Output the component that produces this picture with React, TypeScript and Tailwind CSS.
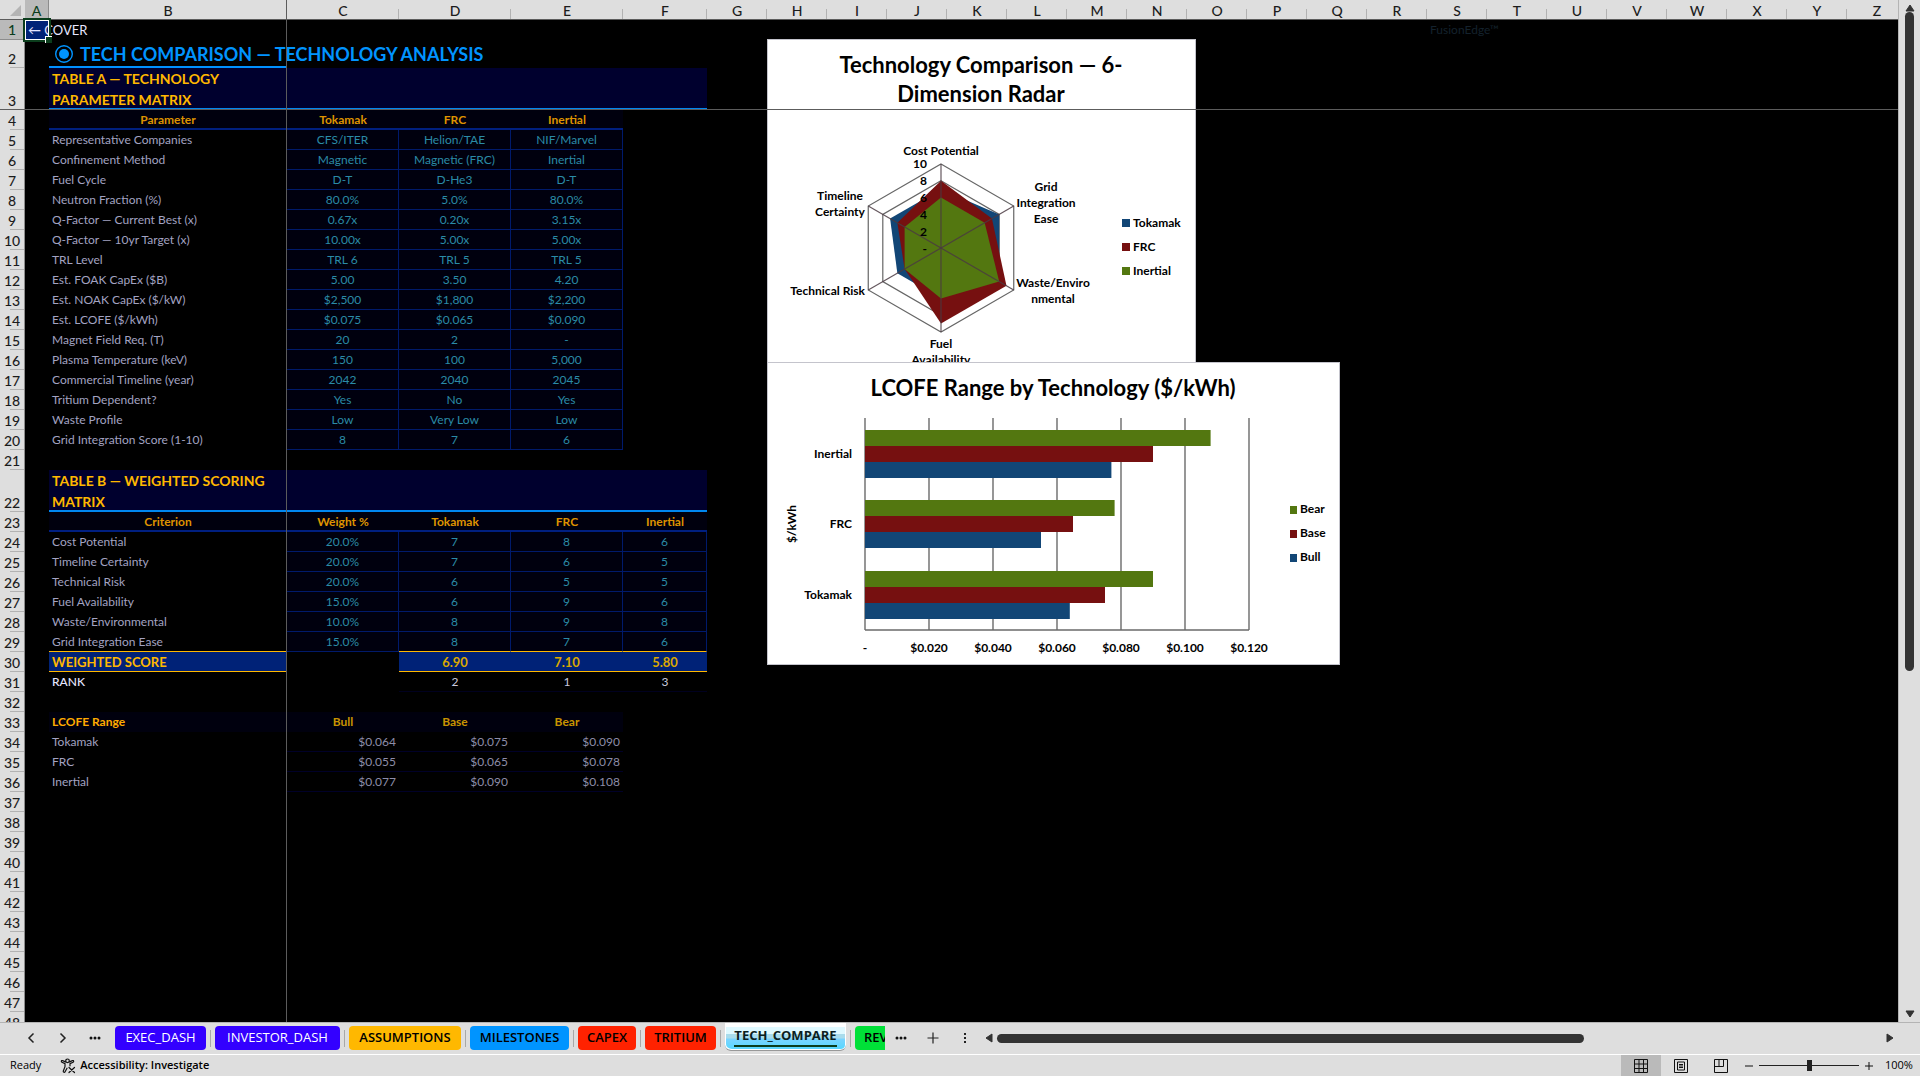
import { ReactNode } from 'react';

const COLUMNS = 'ABCDEFGHIJKLMNOPQRSTUVWXYZ'.split('');

const columnWidth: Record<string, string> = {
  A: 'w-[24px]',
  B: 'w-[238px]',
  C: 'w-[112px]',
  D: 'w-[112px]',
  E: 'w-[112px]',
  F: 'w-[84px]',
};

const styles = {
  empty: '',
  title: 'text-lg leading-6 font-bold text-[#0094ff] shadow-[inset_0_-2px_0_#0090ff]',
  band: 'bg-[#00002e] text-sm leading-[21px] font-bold whitespace-normal text-[#ffb800] shadow-[inset_0_-2px_0_#0087f0]',
  head: 'bg-[#00000e] text-center font-bold text-[#de9300] shadow-[inset_0_-2px_0_#001f80]',
  label: 'text-[#a3a3c2]',
  value: 'border-r border-b border-[#001a6b] bg-[#00000e] text-center text-[#2b8ba6]',
  lastLabel: 'border-b border-[#ffb800] text-[#a3a3c2]',
  lastValue: 'border-r border-b border-r-[#001a6b] border-b-[#ffb800] bg-[#00000e] text-center text-[#2b8ba6]',
  scoreLabel: 'border-b border-[#ffb800] bg-[#002277] text-[13px] font-bold text-[#ffb800]',
  score: 'border-b border-[#ffb800] bg-[#002277] text-center text-[13px] font-bold text-[#dba800]',
  rankLabel: 'font-medium text-[#e6e6ff]',
  rank: 'border-b border-[#00001f] text-center text-[#c9c9dd]',
  rangeLabel: 'bg-[#00000e] font-bold text-[#ffab00]',
  rangeHead: 'bg-[#00000e] text-center font-bold text-[#c99400]',
  money: 'border-b border-[#000028] text-right text-[#8d8da8]',
};

type Kind = keyof typeof styles;
type Cell = { text?: string; kind: Kind };

const cells = (kinds: Kind[], texts: string[]): Cell[] =>
  kinds.map((kind, i) => ({ kind, text: texts[i] }));

const fiveBands: Kind[] = ['band', 'band', 'band', 'band', 'band'];
const paramRow = (...t: string[]) => cells(['label', 'value', 'value', 'value'], t);
const scoreRow = (...t: string[]) => cells(['label', 'value', 'value', 'value', 'value'], t);
const moneyRow = (...t: string[]) => cells(['label', 'money', 'money', 'money'], t);

const sheet: Record<number, Cell[]> = {
  2: cells(['title'], ['TECH COMPARISON — TECHNOLOGY ANALYSIS']),
  3: cells(fiveBands, ['TABLE A — TECHNOLOGY PARAMETER MATRIX']),
  4: cells(['head', 'head', 'head', 'head'], ['Parameter', 'Tokamak', 'FRC', 'Inertial']),
  5: paramRow('Representative Companies', 'CFS/ITER', 'Helion/TAE', 'NIF/Marvel'),
  6: paramRow('Confinement Method', 'Magnetic', 'Magnetic (FRC)', 'Inertial'),
  7: paramRow('Fuel Cycle', 'D-T', 'D-He3', 'D-T'),
  8: paramRow('Neutron Fraction (%)', '80.0%', '5.0%', '80.0%'),
  9: paramRow('Q-Factor — Current Best (x)', '0.67x', '0.20x', '3.15x'),
  10: paramRow('Q-Factor — 10yr Target (x)', '10.00x', '5.00x', '5.00x'),
  11: paramRow('TRL Level', 'TRL 6', 'TRL 5', 'TRL 5'),
  12: paramRow('Est. FOAK CapEx ($B)', '5.00', '3.50', '4.20'),
  13: paramRow('Est. NOAK CapEx ($/kW)', '$2,500', '$1,800', '$2,200'),
  14: paramRow('Est. LCOFE ($/kWh)', '$0.075', '$0.065', '$0.090'),
  15: paramRow('Magnet Field Req. (T)', '20', '2', '-'),
  16: paramRow('Plasma Temperature (keV)', '150', '100', '5,000'),
  17: paramRow('Commercial Timeline (year)', '2042', '2040', '2045'),
  18: paramRow('Tritium Dependent?', 'Yes', 'No', 'Yes'),
  19: paramRow('Waste Profile', 'Low', 'Very Low', 'Low'),
  20: paramRow('Grid Integration Score (1-10)', '8', '7', '6'),
  22: cells(fiveBands, ['TABLE B — WEIGHTED SCORING MATRIX']),
  23: cells(['head', 'head', 'head', 'head', 'head'], ['Criterion', 'Weight %', 'Tokamak', 'FRC', 'Inertial']),
  24: scoreRow('Cost Potential', '20.0%', '7', '8', '6'),
  25: scoreRow('Timeline Certainty', '20.0%', '7', '6', '5'),
  26: scoreRow('Technical Risk', '20.0%', '6', '5', '5'),
  27: scoreRow('Fuel Availability', '15.0%', '6', '9', '6'),
  28: scoreRow('Waste/Environmental', '10.0%', '8', '9', '8'),
  29: cells(['lastLabel', 'value', 'lastValue', 'lastValue', 'lastValue'], ['Grid Integration Ease', '15.0%', '8', '7', '6']),
  30: cells(['scoreLabel', 'empty', 'score', 'score', 'score'], ['WEIGHTED SCORE', '', '6.90', '7.10', '5.80']),
  31: cells(['rankLabel', 'empty', 'rank', 'rank', 'rank'], ['RANK', '', '2', '1', '3']),
  33: cells(['rangeLabel', 'rangeHead', 'rangeHead', 'rangeHead'], ['LCOFE Range', 'Bull', 'Base', 'Bear']),
  34: moneyRow('Tokamak', '$0.064', '$0.075', '$0.090'),
  35: moneyRow('FRC', '$0.055', '$0.065', '$0.078'),
  36: moneyRow('Inertial', '$0.077', '$0.090', '$0.108'),
};

const ROWS = Array.from({ length: 48 }, (_, i) => i + 1);
const rowHeight = (n: number) => (n === 2 ? 'h-[28px]' : n === 3 || n === 22 ? 'h-[42px]' : 'h-5');

function Selection() {
  return (
    <div className="pointer-events-none absolute -top-0.5 -left-0.5 h-6 w-7 border-2 border-[#0b3d1c]">
      <div className="h-full w-full border border-white" />
      <div className="absolute -right-[3px] -bottom-[3px] h-[7px] w-[7px] border-t border-l border-white bg-[#0b3d1c]" />
    </div>
  );
}

function Sheet() {
  return (
    <table className="w-px table-fixed border-separate border-spacing-0 text-xs whitespace-nowrap">
      <colgroup>
        <col className="w-[25px]" />
        {COLUMNS.map((c) => (
          <col key={c} className={columnWidth[c] ?? 'w-[60px]'} />
        ))}
      </colgroup>
      <thead>
        <tr className="h-5 bg-[#dedede] text-sm leading-[17px] text-[#1c1c1c]">
          <th aria-label="Select all" className="border-b border-[#5c5c5c] p-0">
            <svg viewBox="0 0 25 19" className="block h-[19px] w-[25px]">
              <polygon points="21,5 21,16 10,16" fill="#b4b4b4" />
            </svg>
          </th>
          {COLUMNS.map((c) => (
            <th
              key={c}
              scope="col"
              className={
                c === 'A'
                  ? 'border-r border-b border-r-[#8c8c8c] border-b-[#0b3d1c] bg-[#bababa] p-0 pt-0.5 font-medium text-[#0b3d1c]'
                  : 'border-b border-[#5c5c5c] bg-[linear-gradient(#b2b2b2,#b2b2b2)] bg-[length:1px_10px] bg-right-bottom bg-no-repeat p-0 pt-0.5 font-medium'
              }
            >
              {c}
            </th>
          ))}
        </tr>
      </thead>
      <tbody>
        {ROWS.map((n) => (
          <tr key={n} className={rowHeight(n)}>
            <th
              scope="row"
              className={
                n === 1
                  ? 'border-r border-b border-[#8c8c8c] bg-[#bababa] p-0 text-sm leading-[18px] font-medium text-[#0b3d1c]'
                  : 'border-r border-[#8c8c8c] bg-[#dedede] bg-[linear-gradient(#b2b2b2,#b2b2b2)] bg-[length:14px_1px] bg-right-bottom bg-no-repeat p-0 align-bottom text-sm leading-[18px] font-medium text-[#1c1c1c]'
              }
            >
              {n}
            </th>
            {COLUMNS.map((c, i) => {
              if (n === 1 && c === 'A') {
                return (
                  <td key={c} className="relative bg-[#002277] p-0 pl-[3px] text-[13px] leading-[18px] text-[#e6e6ff]">
                    <a href="#cover">← COVER</a>
                    <Selection />
                  </td>
                );
              }
              if (n === 1 && c === 'S') {
                return (
                  <td key={c} className="p-0 px-[3px] leading-[18px] text-[#14222d]">
                    FusionEdge™
                  </td>
                );
              }
              const cell = sheet[n]?.[i - 1];
              if (!cell) return <td key={c} className="p-0" />;
              return (
                <td key={c} className={`p-0 px-[3px] leading-[18px] ${styles[cell.kind]}`}>
                  {cell.kind === 'title' ? (
                    <span className="flex items-center gap-1.5">
                      <svg viewBox="0 0 20 20" className="ml-0.5 h-5 w-5 shrink-0">
                        <circle cx="10" cy="10" r="8.3" fill="none" stroke="#0094ff" strokeWidth="1.4" />
                        <circle cx="10" cy="10" r="5" fill="#0094ff" />
                      </svg>
                      {cell.text}
                    </span>
                  ) : (
                    cell.text
                  )}
                </td>
              );
            })}
          </tr>
        ))}
      </tbody>
    </table>
  );
}

const BLUE = '#124676';
const RED = '#761010';
const GREEN = '#537710';

const CX = 174;
const CY = 209;
const R = 84;

const ring = (values: number[]) =>
  values
    .map((v, i) => {
      const a = (i * Math.PI) / 3;
      return `${CX + (Math.sin(a) * R * v) / 10},${CY - (Math.cos(a) * R * v) / 10}`;
    })
    .join(' ');

function Label({ x, y, anchor = 'middle', children }: { x: number; y: number; anchor?: 'start' | 'middle' | 'end'; children: ReactNode }) {
  return (
    <text x={x} y={y} textAnchor={anchor}>
      {children}
    </text>
  );
}

function RadarChart() {
  return (
    <svg
      viewBox="0 0 429 324"
      className="absolute top-[39px] left-[767px] h-[324px] w-[429px] bg-white fill-black text-xs font-bold outline -outline-offset-1 outline-[#c4c4cc]"
    >
      <g className="text-[22px]">
        <Label x={214} y={34}>Technology Comparison — 6-</Label>
        <Label x={214} y={63}>Dimension Radar</Label>
      </g>
      <g fill="none" stroke="#666" strokeWidth="1.2">
        <polygon points={ring([10, 10, 10, 10, 10, 10])} />
        <polygon points={ring([8, 8, 8, 8, 8, 8])} />
      </g>
      <polygon points={ring([7, 8, 8, 6, 6, 7])} fill={BLUE} />
      <polygon points={ring([8, 7, 9, 9, 5, 6])} fill={RED} />
      <polygon points={ring([6, 6, 8, 6, 5, 5])} fill={GREEN} />
      <g stroke="#4a3a42" strokeOpacity="0.85" strokeWidth="1.2">
        {[0, 1, 2].map((i) => {
          const a = (i * Math.PI) / 3;
          const dx = Math.sin(a) * R;
          const dy = Math.cos(a) * R;
          return <line key={i} x1={CX + dx} y1={CY - dy} x2={CX - dx} y2={CY + dy} />;
        })}
      </g>
      {['10', '8', '6', '4', '2', '-'].map((t, i) => (
        <Label key={t} x={160} y={129 + i * 17} anchor="end">{t}</Label>
      ))}
      <Label x={174} y={116}>Cost Potential</Label>
      <Label x={279} y={152}>Grid</Label>
      <Label x={279} y={168}>Integration</Label>
      <Label x={279} y={184}>Ease</Label>
      <Label x={286} y={248}>Waste/Enviro</Label>
      <Label x={286} y={264}>nmental</Label>
      <Label x={174} y={309}>Fuel</Label>
      <Label x={174} y={325}>Availability</Label>
      <Label x={98} y={256} anchor="end">Technical Risk</Label>
      <Label x={73} y={161}>Timeline</Label>
      <Label x={73} y={177}>Certainty</Label>
      {[['Tokamak', BLUE], ['FRC', RED], ['Inertial', GREEN]].map(([name, color], i) => (
        <g key={name}>
          <rect x="355" y={180 + i * 24} width="8" height="8" fill={color} />
          <Label x={366} y={188 + i * 24} anchor="start">{name}</Label>
        </g>
      ))}
    </svg>
  );
}

const bars = [
  { name: 'Inertial', top: 68, bear: 0.108, base: 0.09, bull: 0.077 },
  { name: 'FRC', top: 138, bear: 0.078, base: 0.065, bull: 0.055 },
  { name: 'Tokamak', top: 209, bear: 0.09, base: 0.075, bull: 0.064 },
];

function BarChart() {
  return (
    <svg
      viewBox="0 0 573 303"
      className="absolute top-[362px] left-[767px] h-[303px] w-[573px] bg-white fill-black text-xs font-bold outline -outline-offset-1 outline-[#c4c4cc]"
    >
      <g className="text-[22px]">
        <Label x={286} y={34}>LCOFE Range by Technology ($/kWh)</Label>
      </g>
      <g stroke="#6a6a6a" strokeWidth="1.4">
        {[0, 1, 2, 3, 4, 5, 6].map((i) => (
          <line key={i} x1={98 + i * 64} x2={98 + i * 64} y1="56" y2="268" />
        ))}
        <line x1="98" x2="482" y1="268" y2="268" />
      </g>
      {['-', '$0.020', '$0.040', '$0.060', '$0.080', '$0.100', '$0.120'].map((t, i) => (
        <Label key={t} x={98 + i * 64} y={290}>{t}</Label>
      ))}
      {bars.map((b) => (
        <g key={b.name}>
          <rect x="98" y={b.top} width={b.bear * 3200} height="16" fill={GREEN} />
          <rect x="98" y={b.top + 16} width={b.base * 3200} height="16" fill={RED} />
          <rect x="98" y={b.top + 32} width={b.bull * 3200} height="16" fill={BLUE} />
          <Label x={85} y={b.top + 28} anchor="end">{b.name}</Label>
        </g>
      ))}
      <g transform="translate(29 162) rotate(-90)">
        <Label x={0} y={0}>$/kWh</Label>
      </g>
      {[['Bear', GREEN], ['Base', RED], ['Bull', BLUE]].map(([name, color], i) => (
        <g key={name}>
          <rect x="523" y={144 + i * 24} width="7" height="8" fill={color} />
          <Label x={533} y={151 + i * 24} anchor="start">{name}</Label>
        </g>
      ))}
    </svg>
  );
}

const tabs = [
  { name: 'EXEC_DASH', look: 'w-[91px] bg-[#3300ff] text-white' },
  { name: 'INVESTOR_DASH', look: 'w-[125px] bg-[#3300ff] text-white' },
  { name: 'ASSUMPTIONS', look: 'w-[112px] bg-[#ffb800] text-black font-semibold' },
  { name: 'MILESTONES', look: 'w-[99px] bg-[#0094ff] text-black font-semibold' },
  { name: 'CAPEX', look: 'w-[58px] bg-[#ff2200] text-black font-semibold' },
  { name: 'TRITIUM', look: 'w-[71px] bg-[#ff2200] text-black font-semibold' },
];

const Divider = () => <div className="mx-1 h-[17px] w-px shrink-0 bg-[#a8a8a8]" />;

const iconButton = 'flex h-6 w-8 shrink-0 items-center justify-center';

function TabBar() {
  return (
    <div className="flex h-8 shrink-0 items-center border-t border-[#b4b4b4] bg-[#dedede] pb-px text-[13px] leading-5">
      <nav aria-label="Sheets" className="flex h-full w-[885px] shrink-0 items-center overflow-hidden pl-[15px]">
        <button aria-label="Previous sheet" className={iconButton}>
          <svg viewBox="0 0 12 12" className="h-3 w-3"><path d="M8.5 1.5 4 6l4.5 4.5" fill="none" stroke="#222" strokeWidth="1.5" /></svg>
        </button>
        <button aria-label="Next sheet" className={iconButton}>
          <svg viewBox="0 0 12 12" className="h-3 w-3"><path d="M3.5 1.5 8 6l-4.5 4.5" fill="none" stroke="#222" strokeWidth="1.5" /></svg>
        </button>
        <button aria-label="More sheets" className={iconButton}>
          <svg viewBox="0 0 12 4" className="h-1 w-3"><g fill="#111"><circle cx="2" cy="2" r="1.5" /><circle cx="6" cy="2" r="1.5" /><circle cx="10" cy="2" r="1.5" /></g></svg>
        </button>
        <div className="ml-1 flex h-full items-center">
          {tabs.map((t) => (
            <div key={t.name} className="flex items-center">
              <button className={`flex h-6 shrink-0 items-center justify-center rounded-sm pb-0.5 ${t.look}`}>{t.name}</button>
              <Divider />
            </div>
          ))}
          <button
            aria-current="page"
            className="flex h-[28px] w-[121px] shrink-0 items-start justify-center self-start rounded-b-md border-b border-[#999] bg-[linear-gradient(#ffffff_0_4px,#dff9ff_4px_11px,#a9dcec_11px_15px,#7ad4ff_16px,#55d8ff)] bg-clip-padding font-bold text-[#0c1f1f] shadow-[inset_1px_-1px_0_#fff,inset_-1px_0_0_#fff]"
          >
            <span className="mt-0.5 border-b-2 border-[#0b3d1c] leading-5">TECH_COMPARE</span>
          </button>
          <Divider />
          <button className="flex h-6 w-[60px] shrink-0 items-center rounded-sm bg-[#00e038] pb-0.5 pl-[9px] font-semibold text-black">REV</button>
        </div>
      </nav>
      <button aria-label="All sheets" className={iconButton}>
        <svg viewBox="0 0 12 4" className="h-1 w-3"><g fill="#111"><circle cx="2" cy="2" r="1.5" /><circle cx="6" cy="2" r="1.5" /><circle cx="10" cy="2" r="1.5" /></g></svg>
      </button>
      <button aria-label="New sheet" className={iconButton}>
        <svg viewBox="0 0 12 12" className="h-3 w-3"><path d="M6 0.5v11M0.5 6h11" stroke="#222" strokeWidth="1.2" /></svg>
      </button>
      <button aria-label="Resize tab bar" className={iconButton}>
        <svg viewBox="0 0 4 12" className="h-3 w-1"><g fill="#222"><rect x="1" y="1" width="2" height="2" /><rect x="1" y="5" width="2" height="2" /><rect x="1" y="9" width="2" height="2" /></g></svg>
      </button>
      <div className="flex min-w-0 flex-1 items-center pr-[26px] pl-1">
        <button aria-label="Scroll left" className="mr-1 shrink-0">
          <svg viewBox="0 0 8 10" className="h-2.5 w-2"><path d="M7 1v8L1 5z" fill="#333" stroke="#333" strokeLinejoin="round" /></svg>
        </button>
        <div className="min-w-0 flex-1">
          <div className="h-[9px] w-[66%] rounded-full bg-[#333]" />
        </div>
        <button aria-label="Scroll right" className="shrink-0">
          <svg viewBox="0 0 8 10" className="h-2.5 w-2"><path d="M1 1v8l6-4z" fill="#333" stroke="#333" strokeLinejoin="round" /></svg>
        </button>
      </div>
    </div>
  );
}

function StatusBar() {
  return (
    <footer className="flex h-[22px] shrink-0 items-center border-t border-white bg-[#dedede] text-[11px] text-black">
      <span className="pl-2.5">Ready</span>
      <button className="ml-[19px] flex items-center gap-1 font-semibold">
        <svg viewBox="0 0 16 16" className="h-4 w-4" fill="none" stroke="#111" strokeWidth="1.2" strokeLinecap="round" strokeLinejoin="round">
          <circle cx="7.5" cy="2.8" r="1.8" />
          <path d="M5.6 3.9 2.5 2.6C1.3 2.2.9 3.7 1.9 4.2L5 5.6v3L3.3 13c-.4 1.3 1.2 1.9 1.8.7L7 10.2M9.4 3.9l3.1-1.3c1.2-.4 1.6 1.1.6 1.6L10 5.6v2.2" />
          <path d="m9 9.5 5.5 5M14.5 9.5l-5.5 5" />
        </svg>
        Accessibility: Investigate
      </button>
      <div className="ml-auto flex h-full items-center">
        <button aria-label="Normal view" className="flex h-full w-10 items-center justify-center bg-[#bababa]">
          <svg viewBox="0 0 14 14" className="h-3.5 w-3.5"><path d="M.5.5h13v13H.5zM.5 5h13M.5 9.5h13M5 .5v13M9.5.5v13" fill="none" stroke="#111" /></svg>
        </button>
        <button aria-label="Page layout" className="flex h-full w-10 items-center justify-center">
          <svg viewBox="0 0 14 14" className="h-3.5 w-3.5"><path d="M.5.5h13v13H.5zM3.5 3h7v8h-7zM5 5.5h4M5 7h4M5 8.5h4" fill="none" stroke="#111" /></svg>
        </button>
        <button aria-label="Page break preview" className="flex h-full w-10 items-center justify-center">
          <svg viewBox="0 0 14 14" className="h-3.5 w-3.5"><path d="M.5.5h13v13H.5zM.5 7.5h9v-7M5 .5v7" fill="none" stroke="#111" /></svg>
        </button>
        <button aria-label="Zoom out" className="ml-0.5 flex w-3 justify-center">
          <svg viewBox="0 0 8 8" className="h-2 w-2"><path d="M0 4h8" stroke="#111" /></svg>
        </button>
        <input
          type="range"
          aria-label="Zoom"
          min={0}
          max={200}
          defaultValue={100}
          className="mx-1 h-3 w-[100px] appearance-none bg-[linear-gradient(#222,#222)] bg-[length:100%_1px] bg-center bg-no-repeat [&::-webkit-slider-thumb]:h-[11px] [&::-webkit-slider-thumb]:w-[5px] [&::-webkit-slider-thumb]:appearance-none [&::-webkit-slider-thumb]:bg-[#222]"
        />
        <button aria-label="Zoom in" className="flex w-3 justify-center">
          <svg viewBox="0 0 8 8" className="h-2 w-2"><path d="M0 4h8M4 0v8" stroke="#111" /></svg>
        </button>
        <span className="w-[45px] pl-2.5">100%</span>
      </div>
    </footer>
  );
}

export default function App() {
  return (
    <div className="flex h-screen flex-col overflow-hidden bg-black font-['Open_Sans',sans-serif]">
      <div className="flex min-h-0 flex-1">
        <main className="relative min-w-0 flex-1 overflow-hidden bg-black font-['Lato',sans-serif]">
          <Sheet />
          <RadarChart />
          <BarChart />
          <div className="pointer-events-none absolute inset-x-0 top-[109px] h-px bg-[#5c5c5c]" />
          <div className="pointer-events-none absolute inset-y-0 left-[286px] w-px bg-[#5c5c5c]" />
        </main>
        <aside aria-label="Vertical scroll" className="flex w-[22px] shrink-0 flex-col items-center border-l border-[#b4b4b4] bg-[#dedede] py-1">
          <button aria-label="Scroll up">
            <svg viewBox="0 0 10 8" className="h-2 w-2.5"><path d="M1 7h8L5 1z" fill="#333" stroke="#333" strokeLinejoin="round" /></svg>
          </button>
          <div className="min-h-0 flex-1 self-center">
            <div className="h-[66%] w-[9px] rounded-full bg-[#333]" />
          </div>
          <button aria-label="Scroll down">
            <svg viewBox="0 0 10 8" className="h-2 w-2.5"><path d="M1 1h8L5 7z" fill="#333" stroke="#333" strokeLinejoin="round" /></svg>
          </button>
        </aside>
      </div>
      <TabBar />
      <StatusBar />
    </div>
  );
}
